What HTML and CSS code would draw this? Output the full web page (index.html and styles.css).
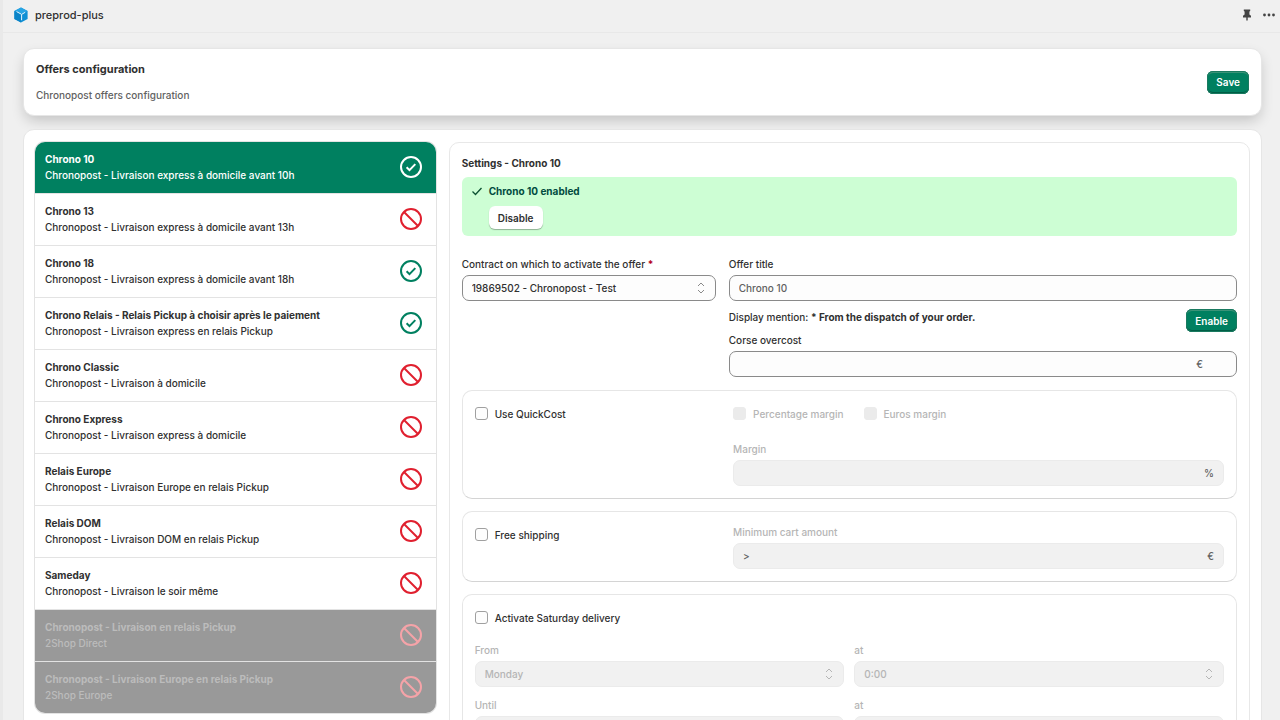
FILE: index.html
```html
<!DOCTYPE html>
<html lang="en">
<head>
    <meta charset="UTF-8">
    <meta name="viewport" content="width=device-width, initial-scale=1.0">
    <title>preprod-plus</title>
    <link rel="stylesheet" href="styles.css">
</head>
<body>
    <!-- Icons shared by the offer rows -->
    <svg class="sprite" aria-hidden="true">
        <symbol id="icon-on" viewBox="0 0 24 24">
            <circle cx="12" cy="12" r="10" fill="none" stroke="currentColor" stroke-width="2"/>
            <path d="M7.6 12.2l2.9 2.9 5.8-6" fill="none" stroke="currentColor" stroke-width="2"/>
        </symbol>
        <symbol id="icon-off" viewBox="0 0 24 24">
            <circle cx="12" cy="12" r="10" fill="none" stroke="currentColor" stroke-width="2"/>
            <path d="M5 5l14 14" fill="none" stroke="currentColor" stroke-width="2"/>
        </symbol>
    </svg>

    <header class="topbar">
        <svg class="logo" viewBox="0 0 16 16" aria-hidden="true">
            <path d="M8 .5L14.6 4.1v7.8L8 15.5 1.4 11.9V4.1z" fill="#0e8fd4"/>
            <path d="M8 .5L14.6 4.1 8 7.6 1.4 4.1z" fill="#26a4e4"/>
            <path d="M8 7.6v7.9L1.4 11.9V4.1z" fill="#0b84c8"/>
            <path d="M3.6 4.6L8 7M8.6 7.2v6M8.6 7.4L12.2 5.3" fill="none" stroke="#e6f4fb" stroke-width="1"/>
        </svg>
        <span class="app-name">preprod-plus</span>
        <button class="icon-button" type="button" aria-label="Pin">
            <svg width="10" height="12" viewBox="0 0 10 12"><path d="M1.8.4h6.4v1.7l-.8.5v3l1.6 1.2v1.7H5.7v2.6L5 12l-.7-.9V8.5H1V6.8l1.6-1.2v-3l-.8-.5z" fill="#444"/></svg>
        </button>
        <button class="icon-button" type="button" aria-label="More">
            <svg width="12" height="12" viewBox="0 0 12 12" fill="#444"><circle cx="1.5" cy="6" r="1.4"/><circle cx="6" cy="6" r="1.4"/><circle cx="10.5" cy="6" r="1.4"/></svg>
        </button>
    </header>

    <main class="page">
        <section class="card page-header">
            <div>
                <h1>Offers configuration</h1>
                <p class="subtitle">Chronopost offers configuration</p>
            </div>
            <button class="btn btn-primary" type="button">Save</button>
        </section>

        <section class="card layout">
            <ul class="offers">
                <li><button class="offer selected" type="button">
                    <span class="offer-text"><b>Chrono 10</b><span>Chronopost - Livraison express à domicile avant 10h</span></span>
                    <svg class="status on"><use href="#icon-on"/></svg>
                </button></li>
                <li><button class="offer" type="button">
                    <span class="offer-text"><b>Chrono 13</b><span>Chronopost - Livraison express à domicile avant 13h</span></span>
                    <svg class="status off"><use href="#icon-off"/></svg>
                </button></li>
                <li><button class="offer" type="button">
                    <span class="offer-text"><b>Chrono 18</b><span>Chronopost - Livraison express à domicile avant 18h</span></span>
                    <svg class="status on"><use href="#icon-on"/></svg>
                </button></li>
                <li><button class="offer" type="button">
                    <span class="offer-text"><b>Chrono Relais - Relais Pickup à choisir après le paiement</b><span>Chronopost - Livraison express en relais Pickup</span></span>
                    <svg class="status on"><use href="#icon-on"/></svg>
                </button></li>
                <li><button class="offer" type="button">
                    <span class="offer-text"><b>Chrono Classic</b><span>Chronopost - Livraison à domicile</span></span>
                    <svg class="status off"><use href="#icon-off"/></svg>
                </button></li>
                <li><button class="offer" type="button">
                    <span class="offer-text"><b>Chrono Express</b><span>Chronopost - Livraison express à domicile</span></span>
                    <svg class="status off"><use href="#icon-off"/></svg>
                </button></li>
                <li><button class="offer" type="button">
                    <span class="offer-text"><b>Relais Europe</b><span>Chronopost - Livraison Europe en relais Pickup</span></span>
                    <svg class="status off"><use href="#icon-off"/></svg>
                </button></li>
                <li><button class="offer" type="button">
                    <span class="offer-text"><b>Relais DOM</b><span>Chronopost - Livraison DOM en relais Pickup</span></span>
                    <svg class="status off"><use href="#icon-off"/></svg>
                </button></li>
                <li><button class="offer" type="button">
                    <span class="offer-text"><b>Sameday</b><span>Chronopost - Livraison le soir même</span></span>
                    <svg class="status off"><use href="#icon-off"/></svg>
                </button></li>
                <li><button class="offer" type="button" disabled>
                    <span class="offer-text"><b>Chronopost - Livraison en relais Pickup</b><span>2Shop Direct</span></span>
                    <svg class="status off"><use href="#icon-off"/></svg>
                </button></li>
                <li><button class="offer" type="button" disabled>
                    <span class="offer-text"><b>Chronopost - Livraison Europe en relais Pickup</b><span>2Shop Europe</span></span>
                    <svg class="status off"><use href="#icon-off"/></svg>
                </button></li>
            </ul>

            <form class="settings">
                <h2>Settings - Chrono 10</h2>
                <div class="banner">
                    <svg class="banner-icon" viewBox="0 0 12 12" aria-hidden="true"><path d="M1.5 6.5l3 3 6-6.5" fill="none" stroke="#0c5132" stroke-width="1.3"/></svg>
                    <div>
                        <p class="banner-title">Chrono 10 enabled</p>
                        <button class="btn btn-plain" type="button">Disable</button>
                    </div>
                </div>

                <div class="columns">
                    <div class="field">
                        <label for="contract">Contract on which to activate the offer <span class="required">*</span></label>
                        <div class="control">
                            <select id="contract"><option>19869502 - Chronopost - Test</option></select>
                            <svg class="arrows" viewBox="0 0 8 12"><path d="M1 4l3-3 3 3M1 8l3 3 3-3"/></svg>
                        </div>
                    </div>
                    <div>
                        <div class="field">
                            <label for="title">Offer title</label>
                            <div class="control"><input type="text" id="title" placeholder="Chrono 10"></div>
                        </div>
                        <div class="mention">
                            <span>Display mention: <b>* From the dispatch of your order.</b></span>
                            <button class="btn btn-primary" type="button">Enable</button>
                        </div>
                        <div class="field">
                            <label for="corse">Corse overcost</label>
                            <div class="control spinner"><input type="text" id="corse"><span class="suffix">€</span></div>
                        </div>
                    </div>
                </div>

                <div class="box columns">
                    <label class="check"><input type="checkbox">Use QuickCost</label>
                    <div>
                        <div class="check-row">
                            <label class="check disabled"><input type="checkbox" disabled>Percentage margin</label>
                            <label class="check disabled"><input type="checkbox" disabled>Euros margin</label>
                        </div>
                        <div class="field disabled">
                            <label for="margin">Margin</label>
                            <div class="control"><input type="text" id="margin" disabled><span class="suffix">%</span></div>
                        </div>
                    </div>
                </div>

                <div class="box columns">
                    <label class="check"><input type="checkbox">Free shipping</label>
                    <div class="field disabled">
                        <label for="minimum">Minimum cart amount</label>
                        <div class="control"><span class="prefix">&gt;</span><input type="text" id="minimum" disabled><span class="suffix">€</span></div>
                    </div>
                </div>

                <div class="box">
                    <label class="check"><input type="checkbox">Activate Saturday delivery</label>
                    <div class="schedule">
                        <div class="field disabled">
                            <label for="from-day">From</label>
                            <div class="control">
                                <select id="from-day" disabled><option>Monday</option></select>
                                <svg class="arrows" viewBox="0 0 8 12"><path d="M1 4l3-3 3 3M1 8l3 3 3-3"/></svg>
                            </div>
                        </div>
                        <div class="field disabled">
                            <label for="from-hour">at</label>
                            <div class="control">
                                <select id="from-hour" disabled><option>0:00</option></select>
                                <svg class="arrows" viewBox="0 0 8 12"><path d="M1 4l3-3 3 3M1 8l3 3 3-3"/></svg>
                            </div>
                        </div>
                        <div class="field disabled">
                            <label for="until-day">Until</label>
                            <div class="control">
                                <select id="until-day" disabled><option>Monday</option></select>
                                <svg class="arrows" viewBox="0 0 8 12"><path d="M1 4l3-3 3 3M1 8l3 3 3-3"/></svg>
                            </div>
                        </div>
                        <div class="field disabled">
                            <label for="until-hour">at</label>
                            <div class="control">
                                <select id="until-hour" disabled><option>0:00</option></select>
                                <svg class="arrows" viewBox="0 0 8 12"><path d="M1 4l3-3 3 3M1 8l3 3 3-3"/></svg>
                            </div>
                        </div>
                    </div>
                </div>
            </form>
        </section>
    </main>
</body>
</html>
```
FILE: styles.css
```css
* {
    box-sizing: border-box;
}
html {
    scrollbar-width: none;
}
body {
    margin: 0;
    border-left: 3px solid #e9e9e9;
    background: #f0f0f0;
    color: #303030;
    font: 500 10px/16px Inter, sans-serif;
}
h1, h2, p {
    margin: 0;
}
button, input, select {
    font: inherit;
    color: inherit;
}
b {
    font-weight: 700;
}
.sprite {
    display: none;
}

/* Top bar */
.topbar {
    display: flex;
    align-items: center;
    height: 33px;
    padding: 0 5px 2px 10px;
    border-bottom: 1px solid #e8e8e8;
}
.logo {
    width: 16px;
    height: 16px;
    margin-right: 6px;
}
.app-name {
    flex: 1;
    font-size: 11px;
    font-weight: 450;
}
.icon-button {
    display: flex;
    margin-left: 11px;
    padding: 0;
    border: 0;
    background: none;
}

.page {
    padding: 15px 18px 15px 20px;
}
.card {
    border: 1px solid #e6e6e6;
    border-radius: 11px;
    background: #fff;
}
.page-header {
    display: flex;
    align-items: center;
    justify-content: space-between;
    margin-bottom: 13px;
    padding: 12px;
    box-shadow: 0 6px 14px -2px rgba(0, 0, 0, 0.2);
}
h1 {
    margin-bottom: 10px;
    font-size: 11px;
    font-weight: 700;
    line-height: 16px;
}
.subtitle {
    color: #616161;
}

/* Buttons */
.btn {
    height: 23px;
    padding: 0 9px;
    border: 0;
    border-radius: 6px;
    font-weight: 600;
}
.btn-primary {
    background: #008060;
    color: #fff;
    box-shadow: inset 0 0 0 1px #1a7a60, inset 0 2px 0 #3a9378, inset 0 -2px 0 #005e46;
}
.btn-plain {
    background: #fff;
    box-shadow: 0 1px 1px rgba(0, 0, 0, 0.3);
}

.layout {
    display: grid;
    grid-template-columns: 1fr 2fr;
    align-items: start;
    gap: 13px;
    padding: 12px 11px;
}

/* Offer list */
.offers {
    margin: 0;
    padding: 0;
    overflow: hidden;
    border-radius: 10px;
    list-style: none;
    box-shadow: 0 0 0 1px #e3e3e3;
}
.offers li + li {
    border-top: 1px solid #e3e3e3;
}
.offer {
    display: flex;
    align-items: center;
    width: 100%;
    padding: 9px 13px 10px 10px;
    border: 0;
    background: #fff;
    text-align: left;
}
.offer-text {
    flex: 1;
}
.offer-text > * {
    display: block;
}
.status {
    width: 24px;
    height: 24px;
}
.on {
    color: #008060;
}
.off {
    color: #e0202f;
}
.selected {
    background: #008060;
    color: #fff;
}
.selected .status {
    color: #fff;
}
.offer:disabled {
    background: #999;
    color: #bcbcbc;
}
.offer:disabled .status {
    color: #f5a3a8;
}

/* Settings */
.settings {
    padding: 12px;
    border: 1px solid #e8e8e8;
    border-radius: 10px;
}
h2 {
    margin-bottom: 6px;
    font-size: 10px;
    font-weight: 700;
    line-height: 16px;
}
.banner {
    display: flex;
    gap: 6px;
    margin-bottom: 20px;
    padding: 6px 9px 7px;
    border-radius: 6px;
    background: #cdfed4;
}
.banner-icon {
    width: 12px;
    height: 12px;
    margin-top: 2px;
}
.banner-title {
    margin-bottom: 7px;
    color: #014b40;
    font-weight: 700;
}
.columns {
    display: grid;
    grid-template-columns: 1fr 2fr;
    align-items: start;
    gap: 13px;
}
.field > label {
    display: block;
    margin-bottom: 3px;
}
.required {
    color: #b3001b;
    font-weight: 700;
}
.control {
    display: flex;
    align-items: center;
    position: relative;
    height: 26px;
    border: 1px solid #8a8a8a;
    border-radius: 7px;
    background: #fdfdfd;
}
.control input,
.control select {
    flex: 1;
    min-width: 0;
    height: 24px;
    padding: 0 9px;
    border: 0;
    outline: none;
    background: none;
    appearance: none;
}
.control input::placeholder {
    color: #616161;
}
.arrows {
    position: absolute;
    right: 10px;
    width: 8px;
    height: 12px;
    fill: none;
    stroke: #8a8a8a;
    pointer-events: none;
}
.suffix {
    padding-right: 9px;
    color: #616161;
}
.prefix {
    padding-left: 9px;
    color: #616161;
}
.spinner .suffix {
    padding-right: 33px;
}
.mention {
    display: flex;
    align-items: flex-start;
    justify-content: space-between;
    margin-top: 8px;
}
.box {
    margin-top: 13px;
    padding: 12px;
    border: 1px solid #e6e6e6;
    border-bottom-color: #d4d4d4;
    border-radius: 10px;
}
.box + .box {
    margin-top: 12px;
}
.check {
    display: flex;
    align-items: center;
    gap: 7px;
    height: 21px;
}
.check input {
    width: 13px;
    height: 13px;
    margin: 0;
    border: 1px solid #a0a0a0;
    border-radius: 3px;
    background: #fdfdfd;
    appearance: none;
}
.check input:disabled {
    border-color: #ebebeb;
    background: #ebebeb;
}
.check-row {
    display: flex;
    gap: 20px;
    margin-bottom: 17px;
}
.schedule {
    display: grid;
    grid-template-columns: 1fr 1fr;
    gap: 10px;
    margin-top: 14px;
}
.disabled {
    color: #b5b5b5;
}
.disabled .control {
    border-color: #ebebeb;
    background: #f1f1f1;
}
.disabled select {
    opacity: 1;
}
.disabled .arrows {
    stroke: #b5b5b5;
}
```
